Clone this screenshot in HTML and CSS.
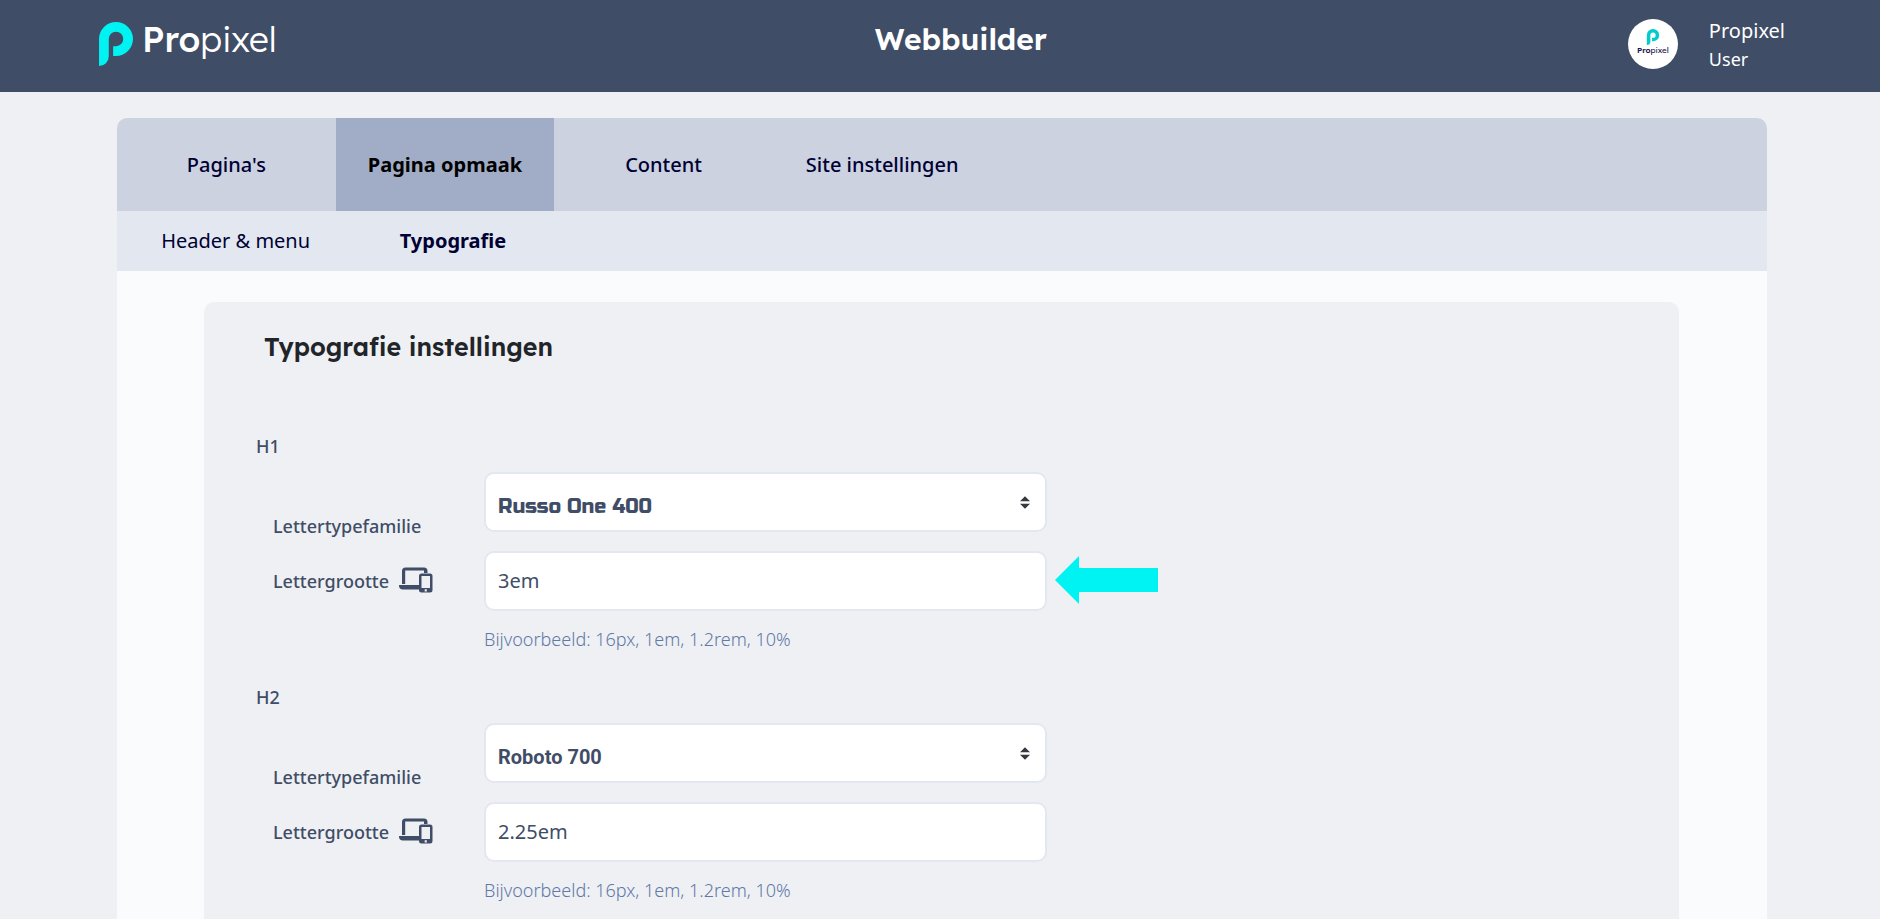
FILE: index.html
```html
<!DOCTYPE html>
<html lang="nl">
<head>
	<meta charset="UTF-8">
	<meta name="viewport" content="width=device-width, initial-scale=1">
	<title>Webbuilder</title>
	<link rel="stylesheet" href="styles.css">
</head>
<body>
	<svg class="sprite" aria-hidden="true">
		<symbol id="mark" viewBox="0 0 101 131">
			<path d="M0 50.5A50.5 50.5 0 0 1 101 50.5A50.5 50.5 0 0 1 50.5 101H42V72Q46 73 50.5 72A21.5 21.5 0 0 0 50.5 29A21.5 21.5 0 0 0 29 50.5V102A29 29 0 0 1 0 131Z"/>
		</symbol>
		<symbol id="devices" viewBox="0 0 34 26">
			<path d="M3 17V4Q3 0.500 6.500 0.500H25Q28.500 0.500 28.500 4V6H25V3.500H6.200V17Z"/>
			<path d="M0 18H20V22.500H4Q0 22.500 0 18.500Z"/>
			<path fill-rule="evenodd" d="M22.500 6.500H31Q33.500 6.500 33.500 9V23Q33.500 25.500 31 25.500H22.500Q20 25.500 20 23V9Q20 6.500 22.500 6.500ZM22.500 9V21H31V9ZM25.700 22.300V24.500H27.800V22.300Z"/>
		</symbol>
	</svg>
	<header class="header">
		<a class="logo" href="#">
			<svg class="logo-mark"><use href="#mark"/></svg>
			<span class="logo-text"><b>Pro</b>pixel</span>
		</a>
		<h1 class="header-title">Webbuilder</h1>
		<div class="user">
			<div class="avatar">
				<svg class="avatar-mark"><use href="#mark"/></svg>
				<span class="avatar-text"><b>Pro</b>pixel</span>
			</div>
			<div class="user-info">
				<div class="user-name">Propixel</div>
				<div class="user-role">User</div>
			</div>
		</div>
	</header>
	<main class="main">
		<nav class="tabs">
			<a href="#">Pagina's</a>
			<a class="selected" href="#">Pagina opmaak</a>
			<a href="#">Content</a>
			<a href="#">Site instellingen</a>
		</nav>
		<nav class="subtabs">
			<a href="#">Header &amp; menu</a>
			<a class="selected" href="#">Typografie</a>
		</nav>
		<div class="content">
			<form class="card">
				<h2 class="card-title">Typografie instellingen</h2>

				<section class="group">
					<h3 class="group-title">H1</h3>
					<div class="row row-font">
						<label for="h1-font">Lettertypefamilie</label>
						<select id="h1-font" class="field font-russo">
							<option>Russo One 400</option>
						</select>
					</div>
					<div class="row">
						<label for="h1-size">Lettergrootte <svg class="devices"><use href="#devices"/></svg></label>
						<input id="h1-size" class="field" type="text" value="3em">
						<svg class="arrow" viewBox="0 0 103 48"><path d="M0 24L24 0V12H103V36H24V48Z"/></svg>
					</div>
					<p class="hint">Bijvoorbeeld: 16px, 1em, 1.2rem, 10%</p>
				</section>

				<section class="group">
					<h3 class="group-title">H2</h3>
					<div class="row row-font">
						<label for="h2-font">Lettertypefamilie</label>
						<select id="h2-font" class="field font-roboto">
							<option>Roboto 700</option>
						</select>
					</div>
					<div class="row">
						<label for="h2-size">Lettergrootte <svg class="devices"><use href="#devices"/></svg></label>
						<input id="h2-size" class="field" type="text" value="2.25em">
					</div>
					<p class="hint">Bijvoorbeeld: 16px, 1em, 1.2rem, 10%</p>
				</section>
			</form>
		</div>
	</main>
</body>
</html>
```

FILE: styles.css
```css
*{
	margin: 0;
	padding: 0;
	box-sizing: border-box;
}
body{
	display: flex;
	flex-direction: column;
	min-height: 100vh;
	background: #eff0f4;
	color: #3f4d66;
	font-family: "Noto Sans", sans-serif;
	font-size: 20px;
}
a{
	color: inherit;
	text-decoration: none;
}
.sprite{
	position: absolute;
	width: 0;
	height: 0;
}

/* header */
.header{
	display: flex;
	justify-content: space-between;
	align-items: flex-start;
	height: 92px;
	padding: 16px 95px 0 99px;
	background: #3f4d66;
	color: #fff;
}
.logo{
	display: flex;
	align-items: flex-start;
	gap: 9px;
	min-width: 195px;
	padding-top: 6px;
}
.logo-mark{
	width: 34px;
	height: 44px;
	fill: #00f3f3;
}
.logo-text{
	font-family: "Lexend Deca", Lato, sans-serif;
	font-size: 35px;
	font-weight: 300;
	line-height: 34px;
}
.logo-text b{
	font-weight: 500;
}
.header-title{
	font-family: "Lexend Deca", Inter, sans-serif;
	font-size: 30px;
	font-weight: 600;
	line-height: 46px;
}
.user{
	display: flex;
	align-items: flex-start;
	gap: 31px;
}
.avatar{
	display: flex;
	flex-direction: column;
	align-items: center;
	width: 50px;
	height: 50px;
	margin-top: 3px;
	padding-top: 10px;
	border-radius: 50%;
	background: #fff;
}
.avatar-mark{
	width: 14px;
	height: 16px;
	fill: #00cccc;
}
.avatar-text{
	color: #1a1550;
	font-family: "Lexend Deca", Lato, sans-serif;
	font-size: 8px;
	font-weight: 400;
	line-height: 10px;
}
.avatar-text b{
	font-weight: 600;
}
.user-info{
	padding-top: 1px;
	line-height: 28px;
}
.user-role{
	font-size: 18px;
}

/* tabs */
.main{
	display: flex;
	flex: 1;
	flex-direction: column;
	margin: 26px 113px 0 117px;
}
.tabs,
.subtabs{
	display: flex;
	color: #000033;
	text-align: center;
}
.tabs{
	overflow: hidden;
	border-radius: 10px 10px 0 0;
	background: #ccd2e0;
	font-weight: 500;
	line-height: 93px;
}
.tabs a,
.subtabs a{
	width: 13.25%;
}
.tabs .selected{
	background: #a1adc6;
	color: #000;
	font-weight: 700;
}
.subtabs{
	padding-left: 10px;
	background: #e2e7f0;
	line-height: 60px;
}
.subtabs .selected{
	font-weight: 700;
}

/* form */
.content{
	display: flex;
	flex: 1;
	padding: 31px 88px 0 87px;
	background: #fafbfd;
}
.card{
	flex: 1;
	padding: 25px 52px 0;
	border-radius: 10px 10px 0 0;
	background: #eff0f4;
}
.card-title{
	margin-bottom: 67px;
	padding-left: 8px;
	color: #212529;
	font-family: "Lexend Deca", Inter, sans-serif;
	font-size: 25px;
	font-weight: 600;
	line-height: 40px;
}
.group + .group{
	margin-top: 34px;
}
.group-title{
	margin-bottom: 14px;
	font-size: 18px;
	font-weight: 550;
	line-height: 24px;
}
.row{
	display: grid;
	grid-template-columns: 211px minmax(0, 563px) auto;
	align-items: center;
	justify-content: start;
	padding-left: 17px;
}
.row label{
	display: flex;
	align-items: center;
	gap: 10px;
	font-size: 18px;
	font-weight: 550;
	line-height: 24px;
}
.row-font{
	align-items: start;
	height: 66px;
	margin-bottom: 13px;
}
.row-font label{
	align-self: end;
}
.devices{
	width: 34px;
	height: 26px;
	margin-bottom: 2px;
	fill: #3f4d66;
}
.field{
	width: 100%;
	height: 60px;
	padding: 0 12px 2px;
	border: 2px solid #e2e7f0;
	border-radius: 10px;
	background: #fff;
	color: #3f4d66;
	font-family: "Noto Sans", sans-serif;
	font-size: 20px;
}
select.field{
	padding: 8px 12px 0;
	appearance: none;
	background: #fff url("data:image/svg+xml,%3Csvg xmlns='http://www.w3.org/2000/svg' viewBox='0 0 4 5'%3E%3Cpath fill='%23343a40' d='M2 0L0 2h4zm0 5L0 3h4z'/%3E%3C/svg%3E") no-repeat right 15px center / 10px 13px;
}
select.font-russo{
	font-family: "Russo One", "DejaVu Sans", sans-serif;
	font-weight: 400;
}
select.font-roboto{
	font-family: Roboto, sans-serif;
	font-weight: 700;
}
.arrow{
	width: 103px;
	height: 48px;
	margin: 0 0 2px 8px;
	fill: #00f3f3;
}
.hint{
	margin-top: 16px;
	padding-left: 228px;
	color: #6079a6;
	font-size: 18px;
	font-weight: 350;
	line-height: 24px;
}
```
